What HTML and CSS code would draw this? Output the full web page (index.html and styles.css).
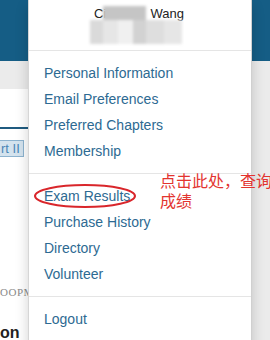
FILE: index.html
```html
<!DOCTYPE html>
<html>
<head>
<meta charset="utf-8">
<link rel="stylesheet" href="styles.css">
</head>
<body>
<div class="page">
  <div class="topbar"></div>
  <div class="content">
    <div class="rule"></div>
    <div class="btn">rt II</div>
    <div class="code">OOPM<span class="blk"></span></div>
    <div class="heading">on</div>
  </div>
</div>

<nav class="dropdown">
  <div class="dd-head">
    <div class="name"><span>Ci</span><span class="gap"></span><span>Wang</span></div>
    <div class="mosaic">
      <i class="c0"></i><i class="c1"></i><i class="c1"></i><i class="c1"></i><i class="c0"></i><i class="c0"></i>
      <i class="c2"></i><i class="c3"></i><i class="c4"></i><i class="c5"></i><i class="c6"></i><i class="c3"></i>
    </div>
  </div>
  <ul class="menu">
    <li><a>Personal Information</a></li>
    <li><a>Email Preferences</a></li>
    <li><a>Preferred Chapters</a></li>
    <li><a>Membership</a></li>
    <li class="divider"></li>
    <li><a>Exam Results</a></li>
    <li><a>Purchase History</a></li>
    <li><a>Directory</a></li>
    <li><a>Volunteer</a></li>
    <li class="divider"></li>
    <li><a>Logout</a></li>
  </ul>
</nav>

<svg class="circle" width="104" height="26" viewBox="0 0 104 26">
  <ellipse cx="52" cy="13" rx="50" ry="11" fill="none" stroke="#d9262b" stroke-width="2"/>
</svg>
<div class="note">点击此处，查询<br>成绩</div>
</body>
</html>
```

FILE: styles.css
```css
html, body {
  margin: 0;
  padding: 0;
}
body {
  width: 270px;
  height: 340px;
  overflow: hidden;
  position: relative;
  background: #ebebeb;
  font-family: "Liberation Sans", Arial, sans-serif;
}
.page {
  display: flex;
  flex-direction: column;
}
.topbar {
  height: 61px;
  background: #155d85;
}
.content {
  margin-top: 28px;
  width: 252px;
  height: 260px;
  background: #fff;
  display: flex;
  flex-direction: column;
  align-items: flex-start;
}
.rule {
  margin-top: 38px;
  width: 100%;
  height: 2px;
  background: #1f5b80;
}
.btn {
  margin-top: 11px;
  height: 15px;
  line-height: 15px;
  padding: 0 3px 0 1px;
  background: #d4e3ee;
  border: 1px solid #8db3cf;
  border-left: none;
  color: #4a86b6;
  font-size: 13px;
}
.code {
  margin-top: 129px;
  font-family: "Liberation Serif", serif;
  font-size: 11px;
  line-height: 12px;
  color: #8a8a8a;
  letter-spacing: 0.5px;
  display: flex;
  align-items: center;
}
.blk {
  display: inline-block;
  width: 6px;
  height: 9px;
  background: #9a9a9a;
  margin-left: 1px;
}
.heading {
  margin-top: 26px;
  font-size: 16px;
  font-weight: bold;
  color: #222;
  line-height: 18px;
}

.dropdown {
  position: absolute;
  left: 28px;
  top: 0;
  width: 222px;
  height: 360px;
  background: #fff;
  border-left: 1px solid #d6d6d6;
  border-right: 1px solid #d0d0d0;
  box-shadow: 0 6px 12px rgba(0, 0, 0, 0.18);
}
.dd-head {
  height: 50px;
  border-bottom: 1px solid #e5e5e5;
  position: relative;
  display: flex;
  justify-content: center;
}
.name {
  margin-top: 6px;
  margin-left: -2px;
  font-size: 13px;
  line-height: 15px;
  color: #222;
  display: flex;
}
.gap {
  width: 44px;
}
.mosaic {
  position: absolute;
  left: 61px;
  top: 6px;
  display: grid;
  grid-template-columns: 13px 15px 15px 13px 18px 18px;
  grid-template-rows: 14px 24px;
  filter: blur(1.5px);
}
.mosaic i { display: block; }
.c0 { background: transparent; }
.c1 { background: #c5c5c5; }
.c2 { background: #dadada; }
.c3 { background: #e6e6e6; }
.c4 { background: #f0f0f0; }
.c5 { background: #d2d2d2; }
.c6 { background: #dedede; }

.menu {
  list-style: none;
  margin: 0;
  padding: 9px 0;
}
.menu a {
  display: block;
  padding: 0 15px;
  font-size: 14px;
  line-height: 26px;
  color: #2d6a92;
}
.divider {
  height: 1px;
  margin: 9px 0;
  background: #e5e5e5;
}

.circle {
  position: absolute;
  left: 33px;
  top: 183px;
}
.note {
  position: absolute;
  left: 160px;
  top: 170px;
  font-family: "Noto Sans CJK SC", sans-serif;
  font-size: 16px;
  line-height: 20px;
  color: #e3342f;
  white-space: nowrap;
}
```
